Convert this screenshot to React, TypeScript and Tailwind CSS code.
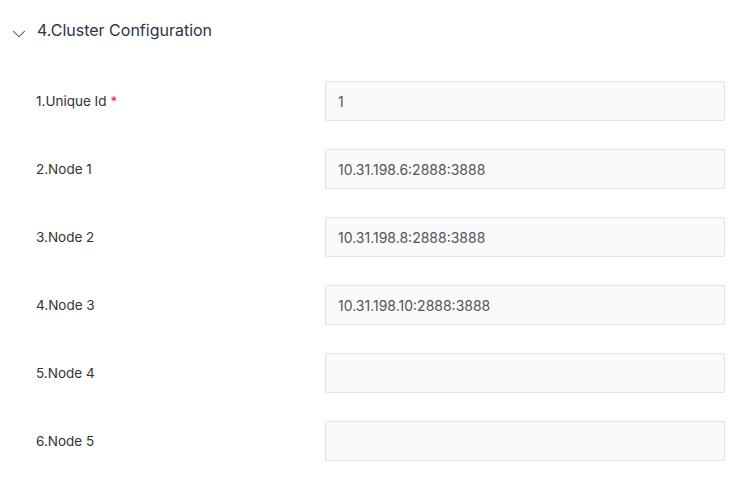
import { ChevronDown } from "lucide-react";

const rows = [
  { label: "1.Unique Id", value: "1", required: true },
  { label: "2.Node 1", value: "10.31.198.6:2888:3888" },
  { label: "3.Node 2", value: "10.31.198.8:2888:3888" },
  { label: "4.Node 3", value: "10.31.198.10:2888:3888" },
  { label: "5.Node 4", value: "" },
  { label: "6.Node 5", value: "" },
];

export default function App() {
  return (
    <div className="w-[746px] h-[485px] bg-white font-['Inter',sans-serif] overflow-hidden">
      {/* header */}
      <div className="flex items-center h-[20px] mt-[20px] pl-[8px]">
        <ChevronDown className="w-[22px] h-[22px] text-[#444] mt-[8px] shrink-0" strokeWidth={1.1} />
        <span className="ml-[7px] text-[16px] text-[#2f3446]">4.Cluster Configuration</span>
      </div>

      {/* fields */}
      <div className="flex flex-col gap-[28px] mt-[41px]">
        {rows.map((row) => (
          <div key={row.label} className="flex items-center h-[40px]">
            <div className="w-[325px] shrink-0 pl-[36px] text-[13.5px] text-[#333]">
              {row.label}
              {row.required && <span className="ml-[4px] text-[#f5222d]">*</span>}
            </div>
            <div className="w-[400px] h-[40px] shrink-0 flex items-center px-[12px] bg-[#f9fafc] border border-[#dfe1e5] text-[14px] text-[#555] rounded-[2px]">
              {row.value}
            </div>
          </div>
        ))}
      </div>
    </div>
  );
}
